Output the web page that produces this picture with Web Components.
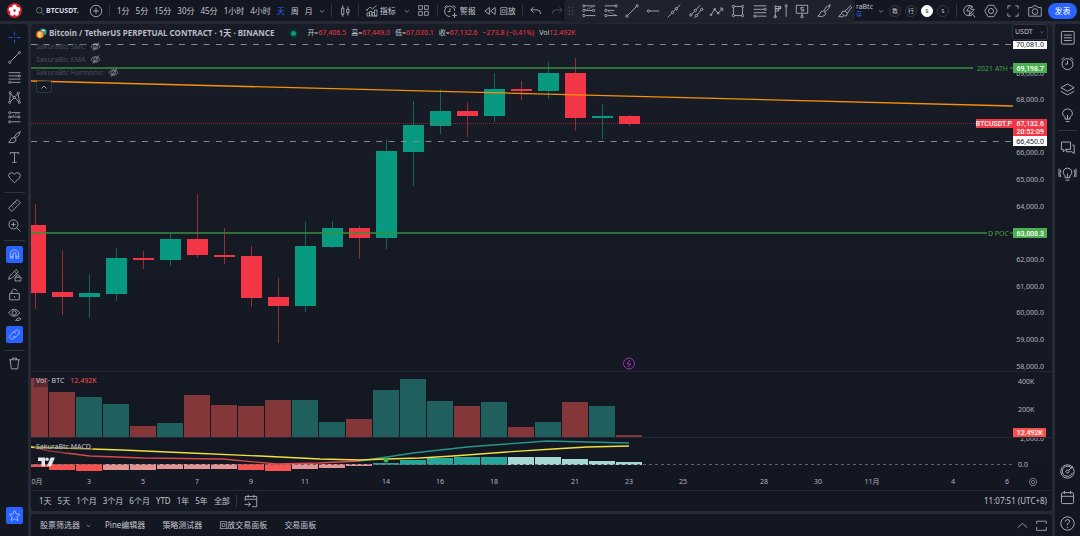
<!DOCTYPE html>
<html lang="zh-CN">
<head>
<meta charset="utf-8">
<title>BTCUSDT.P</title>
<style>
body{margin:0;background:#262a35}
</style>
</head>
<body>
<tv-app></tv-app>
<script>
const BASE = `<style>
:host{box-sizing:border-box;font-family:"Noto Sans","Noto Sans CJK SC",sans-serif;color:#c3c6cf;font-size:8px;line-height:12px}
*{box-sizing:border-box}
button,select{font:inherit;color:inherit;background:none;border:0;padding:0;margin:0;white-space:nowrap}
button{display:inline-flex;align-items:center;justify-content:center;flex:none}
</style>`;
function define(name, html) {
  customElements.define(name, class extends HTMLElement {
    connectedCallback() {
      if (this.shadowRoot) return;
      this.attachShadow({mode: 'open'}).innerHTML = BASE + (typeof html === 'function' ? html(this) : html);
    }
  });
}

/* Icons on a 28-unit grid */
const c = (x, y, r = 2) => `<circle cx="${x}" cy="${y}" r="${r}"/>`;
const p = d => `<path d="${d}"/>`;
const ICONS = {
  search: c(12, 12, 8) + p('M18 18l7 7'),
  plus: c(14, 14, 10) + p('M14 9v10M9 14h10'),
  down: p('M9 12l5 5 5-5'),
  up: p('M5 18l9-8 9 8'),
  upsmall: p('M9 17l5-5 5 5'),
  candles: p('M8 9h4v11H8zM10 4v5M10 20v4M17 11h4v6h-4zM19 6v5M19 17v5'),
  indicators: p('M4 24V18h5v6M9 24V15h5v9M14 24v-7h5v7M19 24V12h5v12zM4 24h20M4 12l6-6 5 4 8-7') + c(4, 12, 1),
  grid: p('M5 5h7v7H5zM16 5h7v7h-7zM5 16h7v7H5zM16 16h7v7h-7z'),
  alarm: c(14, 15, 9) + p('M14 9v6h-4M4 8l5-4M24 8l-5-4'),
  alarmadd: p('M22.500 14a9 9 0 1 0-8 9.500M14 9v6h-4M4 8l5-4M24 8l-5-4M22 17v9M17.500 21.500h9'),
  replay: p('M13 8v12l-8-6zM23 8v12l-8-6z'),
  undo: p('M10 7l-5 5 5 5M5 12h11q6 0 6 7'),
  redo: p('M18 7l5 5-5 5M23 12H12q-6 0-6 7'),
  bolt: p('M21 8a9 9 0 1 0 1 9M20 20l5 5M16 4l-6 10h6l-2 8 9-11h-6l2-6'),
  hex: p('M9 4h10l6 10-6 10H9L3 14z') + c(14, 14, 4.5),
  full: p('M5 10V5h5M18 5h5v5M23 18v5h-5M10 23H5v-5'),
  camera: p('M3 8h6l2-3h6l2 3h6v15H3z') + c(14, 15, 5),
  cross: p('M14 3v7M14 18v7M3 14h7M18 14h7M13 14h2'),
  line: c(5, 23) + c(23, 5) + p('M7 21L21 7'),
  hray: c(6, 14) + p('M8 14h17'),
  extline: p('M3 25L10 18M13 15l4-4M19 9l6-6') + c(11.5, 16.5) + c(18, 10),
  channel: c(5, 21) + c(13, 13) + c(15, 22) + c(24, 11) + p('M6.500 19.500l5-5M14.500 11.500L21 4M16.500 20.500l6-8M11 26l3-2.500'),
  zigzag: p('M4 20l6-9 6 7 7-8M19 9h5v5') + c(3.5, 20.5, 1.5) + c(10, 11, 1.5) + c(16, 18, 1.5),
  rect: c(6, 6) + c(22, 6) + c(6, 22) + c(22, 22) + p('M8 6h12M8 22h12M6 8v12M22 8v12'),
  fib: p('M3 5h22M3 11h18M3 17h22M7 23h18') + c(23, 11) + c(5, 23),
  pattern: c(6, 5) + c(21, 6) + c(5, 23) + c(13, 14) + c(23, 23) + p('M6 7L5 21M7 7l5 6M20 8l-6 5M21 8l2 13M6 22l6-6M15 15l7 7'),
  position: p('M8 5h17M8 13h12M8 22h17') + c(5, 5) + c(5, 13) + c(22, 13) + c(5, 22) + `<path stroke-dasharray="2 2" d="M7 12L23 6"/>`,
  positiondown: p('M3 5h18M8 13h12M8 22h17') + c(23, 5) + c(5, 13) + c(5, 22) + `<path stroke-dasharray="2 2" d="M9 15l14 6"/>`,
  volprofile: p('M4 4v21M4 6h9v4H4M4 10h6v4H4M23 7v17') + c(4, 24) + c(23, 5) + c(12, 8),
  note: p('M4 4h20v14H4zM14 18v5M17 8h-5v3h5v3h-5') + c(14, 24),
  brush: p('M25 3q-9 3-11 10l2 2q7-4 9-12M13 14q-5 0-6 4-1 4-4 5 8 2 12-1 3-3 1-6z'),
  marker: p('M25 4L14 14l4 4L26 7M14 14l-5 1-1 3 5 5 4-1 1-4M8 18l-5 6h7l2-2'),
  text: p('M6 8V5h16v3M14 5v18M10 23h8'),
  heart: p('M14 24L5 15Q1 10 5 6q5-3 9 2 4-5 9-2 4 4 0 9z'),
  ruler: p('M3 19L19 3l6 6L9 25zM8 14l3 3M12 10l2 2M15 7l3 3'),
  zoom: c(12, 12, 8.5) + p('M18 18l7 7M12 8v8M8 12h8'),
  magnet: p('M5 22V13a9 9 0 0 1 18 0v9h-6v-9a3 3 0 0 0-6 0v9zM5 18h6M17 18h6'),
  penlock: p('M3 23l2-6L17 5l4 4-11 11zM14 8l4 4M15 19h11v7H15zM17 19v-3q3-4 6 0v3'),
  lock: p('M5 12h18v12H5zM9 12V7q3-5 8-2l2 3M14 17v3'),
  eyepen: p('M3 11q10-14 21 0Q13 24 3 11zM16 25l5-5 5 2-3 3z') + c(13.5, 11, 4),
  link: p('M12 9l4-4q4-3 7 1 3 3 0 7l-5 5q-3 3-7 0M16 19l-4 4q-4 3-7-1-3-3 0-7l5-5q3-3 7 0'),
  trash: p('M4 7h20M10 7V4h8v3M6 7l2 17h12l2-17'),
  star: p('M14 3l3.500 7.500 8 1-6 5.500 1.500 8-7-4-7 4 1.500-8-6-5.500 8-1z'),
  list: `<rect x="4" y="4" width="21" height="21" rx="2"/>` + p('M8 10h13M8 14.500h13M8 19h13'),
  layers: p('M14 5l11 6-11 6L3 11zM3 17l11 6 11-6'),
  bulb: p('M10 20v-3Q5 14 6 9q2-6 8-6t8 6q1 5-4 8v3zM11 24h6M14 20v-7'),
  chat: p('M4 5h15v12H11l-4 4v-4H4zM22 10h3v14l-4-3h-9v-4'),
  cast: p('M10 21v-3Q6 15 7 10q2-5 7-5t7 5q1 5-3 8v3zM11 25h6M14 21v-7M3 8q-3 6 0 12M25 8q3 6 0 12M0 6v14M28 6v14'),
  target: c(14, 14, 11) + p('M21 9a8.500 8.500 0 1 0 1 7M15 13l8-8') + c(14, 14, 2.5),
  calendar: `<rect x="4" y="6" width="20" height="18" rx="2"/>` + p('M4 12h20M9 3v5M19 3v5'),
  goto: p('M4 14V6h20v18h-8M4 11h20M9 3v5M19 3v5M3 20h10M9 16l4 4-4 4'),
  help: c(14, 14, 11) + p('M10.500 11q0-3.500 3.500-3.500t3.500 3q0 2-3.500 4v2M14 19v2'),
  restore: p('M5 11V6h18v5M5 17v6h18v-6'),
  eyeoff: p('M2 14q12-15 24 0-12 15-24 0zM7 25L23 3') + c(14, 14, 5),
  drag: [6, 14, 22].map(y => [10, 18].map(x => `<circle cx="${x}" cy="${y}" r="1" fill="currentColor"/>`).join('')).join('')
};
define('tv-icon', el => `<style>:host{display:block;flex:none;color:inherit;width:var(--size,16px);height:var(--size,16px)}
svg{display:block;width:100%;height:100%;fill:none;stroke:currentColor;stroke-width:1.500;overflow:visible}</style>
<svg viewBox="0 0 28 28" aria-hidden="true">${ICONS[el.getAttribute('name')]}</svg>`);
const icon = n => `<tv-icon name="${n}"></tv-icon>`;
const ib = (n, cls = '', label = n) => `<button class="${cls}" aria-label="${label}">${icon(n)}</button>`;

define('tv-topbar', `<style>
:host{display:flex;align-items:center;height:21px;background:#131722;position:relative;padding:0 3px 0 7px;white-space:nowrap}
tv-icon{color:#b2b5be}
.logo{width:15px;height:15px;flex:none;margin-right:13px}
.group{display:flex;align-items:center}
.sep{width:1px;height:13px;background:#2f333f;flex:none}
.sym{font-weight:700;font-size:7px;color:#d8dae0;--size:10px;gap:1px;width:47px;justify-content:flex-start}
.add{margin:0 5px 0 6px}
.times{gap:6px;margin-left:7px}
.times .on{color:#2962ff}
.chev{--size:12px}
.right{margin-left:auto}
.user{font-size:7px;line-height:8px;text-align:left;margin-right:2px}
.user small{display:block;font-size:6px;line-height:7px;color:#2962ff}
.r{width:12px;height:12px;border:1px solid #363a45;border-radius:50%;font-size:6px;line-height:8px;margin-left:4px}
.r.on{background:#fff;color:#131722;border-color:#fff}
.pub{background:#2962ff;color:#fff;border-radius:8px;width:29px;height:16px;margin-left:5px}
.tools{position:absolute;left:564px;top:0;width:291px;height:21px;background:#1e222d;border-radius:3px;display:flex;align-items:center;justify-content:space-between;padding:0 2px 0 1px;box-shadow:0 0 4px #0008}
.tools .drag{--size:12px;color:#555966;margin-right:-1px}
</style>
<svg class="logo" viewBox="0 0 30 30"><circle cx="15" cy="15" r="15" fill="#d3202b"/><g fill="#fff"><ellipse cx="15" cy="8.500" rx="4.500" ry="5.500"/><ellipse cx="15" cy="8.500" rx="4.500" ry="5.500" transform="rotate(72 15 15)"/><ellipse cx="15" cy="8.500" rx="4.500" ry="5.500" transform="rotate(144 15 15)"/><ellipse cx="15" cy="8.500" rx="4.500" ry="5.500" transform="rotate(216 15 15)"/><ellipse cx="15" cy="8.500" rx="4.500" ry="5.500" transform="rotate(288 15 15)"/></g><circle cx="15" cy="15" r="2.500" fill="#d3202b"/></svg>
<button class="sym">${icon('search')}BTCUSDT.</button>
${ib('plus', 'add')}<span class="sep"></span>
<div class="group times">${['1分','5分','15分','30分','45分','1小时','4小时','天','周','月'].map(t => `<button class="${t === '天' ? 'on' : ''}">${t}</button>`).join('')}</div>
<div class="group">
<button class="chev" style="margin:0 3px">${icon('down')}</button><span class="sep"></span>
<button style="margin:0 5px">${icon('candles')}</button><span class="sep"></span>
<button style="margin:0 5px 0 6px;gap:1px;--size:14px">${icon('indicators')}指标</button>
<button class="chev">${icon('down')}</button>
<button style="margin:0 6px 0 3px;--size:15px">${icon('grid')}</button><span class="sep"></span>
<button style="margin:0 4px;gap:2px">${icon('alarmadd')}警报</button>
<button style="margin:0 6px 0 2px;gap:2px">${icon('replay')}回放</button><span class="sep"></span>
<button style="margin:0 0 0 5px">${icon('undo')}</button>
<button style="margin:0 0 0 5px;opacity:.400">${icon('redo')}</button>
</div>
<div class="group right">
<button class="user"><span>raBtc<small>存</small></span></button>
<button class="chev" style="margin-right:-2px">${icon('down')}</button>
<button class="r">教</button><button class="r">行</button><button class="r on">S</button><button class="r">S</button>
<span class="sep" style="margin:0 4px 0 7px"></span>
<div class="group" style="gap:6px">${ib('bolt')}${ib('hex')}${ib('full')}${ib('camera')}</div>
<button class="pub">发表</button>
</div>
<div class="tools"><tv-icon class="drag" name="drag"></tv-icon>${['position','positiondown','line','hray','extline','channel','zigzag','rect','fib','volprofile','note','brush','marker'].map(n => ib(n)).join('')}</div>`);

define('tv-leftbar', `<style>
:host{display:flex;flex-direction:column;align-items:center;background:#131722;padding:4px 0 10px 1px;color:#b2b5be;border-radius:0 3px 0 0}
button{width:17px;height:17px;margin:1px 0 2px;border-radius:2px;--size:15px}
.on{background:#2962ff;color:#c8d6ff;--size:13px}
.sel{color:#2962ff}
hr{width:21px;height:1px;border:0;background:#2f333f;margin:4px 0 3px;flex:none}
.fav{margin-top:auto}
</style>
${ib('cross', 'sel')}${['line','fib','pattern','position','brush','text','heart'].map(n => ib(n)).join('')}<hr>
${ib('ruler')}${ib('zoom')}<hr style="margin-bottom:4px">${ib('magnet', 'on')}${ib('penlock')}${ib('lock')}${ib('eyepen')}${ib('link', 'on')}<hr style="margin-top:5px">${ib('trash')}${ib('star', 'on fav')}`);

define('tv-sidebar', `<style>
:host{display:flex;flex-direction:column;align-items:center;background:#131722;padding:4px 0 4px;color:#b2b5be;border-radius:3px 0 0 0}
button{width:20px;height:18px;margin:0 0 8px;--size:17px}
hr{width:19px;height:1px;border:0;background:#2f333f;margin:-2px 0 7px}
.b{margin-top:auto}
button:last-child{margin-bottom:0}
</style>
${ib('list')}${ib('alarm')}${ib('layers')}${ib('bulb')}<hr>${ib('chat')}${ib('cast')}${ib('target', 'b')}${ib('calendar')}${ib('help')}`);

define('tv-legend', `<style>
:host{display:block}
.t{display:flex;align-items:center;white-space:nowrap;height:14px}
h1{font-size:8px;font-weight:700;margin:0 17px 0 2px;color:#b9bcc5;line-height:14px}
.coin{width:11px;height:11px;flex:none}
.dot{width:5px;height:5px;border-radius:50%;background:#089981;box-shadow:0 0 0 2px #0b3236;margin-right:11px;flex:none}
.v{color:#f23645;font-size:7px;margin-right:5px}.v b{font-weight:400;color:#c3c6cf}
.s{display:flex;align-items:center;gap:5px;height:13px;color:#4a4e59;font-size:7px}
.s tv-icon{--size:11px;color:#aeb1ba}
.c{border:1px solid #2f333f;border-radius:2px;width:16px;height:12px;--size:14px;margin-top:2px;background:#161a25}
</style>
<div class="t"><svg class="coin" viewBox="0 0 22 22"><circle cx="14" cy="8" r="7" fill="#26a5a0"/><path d="M11 5h6M14 5v6" stroke="#fff" stroke-width="2"/><circle cx="8" cy="13" r="8" fill="#f7931a" stroke="#181c27"/><path d="M6 9h3q3 2 0 4 4 2 0 4H6zM6 13h3" fill="none" stroke="#fff" stroke-width="1.500"/></svg>
<h1>Bitcoin / TetherUS PERPETUAL CONTRACT · 1天 · BINANCE</h1><span class="dot"></span>
<span class="v"><b>开=</b>67,406.5</span><span class="v"><b>高=</b>67,449.0</span><span class="v"><b>低=</b>67,030.1</span><span class="v"><b>收=</b>67,132.6</span><span class="v">−273.8 (−0.41%)</span><span class="v"><b>Vol</b>12.492K</span></div>
<div class="s">SakuraBtc SMC${icon('eyeoff')}</div><div class="s">SakuraBtc EMA${icon('eyeoff')}</div><div class="s">SakuraBtc Harmonic${icon('eyeoff')}</div>
<button class="c" aria-label="收起">${icon('upsmall')}</button>`);

/* Pane: a plot that fills the width and a fixed value axis */
define('tv-pane', `<style>
:host{display:grid;grid-template-columns:minmax(0,1fr) 39px;position:relative;overflow:hidden;min-height:0}
::slotted(svg){width:100%;height:100%;display:block}
</style><slot></slot>`);

const STEP = 27, X0 = 4;
/* high, top, bottom, low, rising, volume top */
const CANDLES = [[180,201,269,285,0,354],[226,268,273,291,0,368],[250,269,273,294,1,373],[224,234,270,277,1,380],[227,234,236,245,0,402],[210,215,236,242,1,399],[170,215,231,234,0,371],[204,231,233,240,0,381],[222,232,274,283,0,382],[254,273,282,319,0,376],[198,222,282,288,1,376],[197,204,223,224,1,398],[202,204,214,235,0,395],[115,127,214,225,1,366],[77,101,128,162,1,355],[65,87,102,110,1,377],[78,87,92,113,0,382],[49,65,92,98,1,378],[57,65,67,76,0,403],[38,49,67,75,1,398],[34,49,94,107,0,378],[80,92,94,115,1,382],[91,92,100,102,0,411]];
const HIST = [3,6,7,6,6,5,5,5,6,7,5,4,2,-2,-5,-7,-8,-8,-8,-8,-6,-4,-3];
const HC = ['#f7524f','#e59392','#26a69a','#a6d7d3'];
const HK = [0,0,0,1,1,1,1,1,0,0,1,1,1,2,2,2,2,2,3,3,3,3,3];
const candles = CANDLES.map(([h,t,b,l,up], i) => {
  const x = X0 + i * STEP, col = up ? '#089981' : '#f23645';
  return `<rect x="${x}" y="${h}" width="1" height="${l - h}" fill="${col}" opacity=".600"/><rect x="${x - 10}" y="${t}" width="21" height="${b - t}" fill="${col}"/>`;
}).join('');
const vols = CANDLES.map((k, i) => `<rect x="${X0 - 13 + i * STEP}" y="${k[5] - 348}" width="26" height="${413 - k[5]}" fill="${k[4] ? '#1f5f5d' : '#843739'}"/>`).join('');
const hist = HIST.map((h, i) => `<rect x="${X0 - 13 + i * STEP}" y="${h > 0 ? 26 : 27 + h}" width="26" height="${Math.abs(h)}" fill="${HC[HK[i]]}"/>`).join('');
const tick = (t, y) => `<text x="31" y="${y}" text-anchor="end">${t}</text>`;
const TIMES = [['10月',4],['3',58],['5',112],['7',166],['9',220],['11',274],['14',355],['16',409],['18',463],['21',544],['23',598],['25',652],['28',733],['30',787],['11月',841],['4',922],['6',976]];

define('tv-chart', `<style>
:host{display:grid;grid-template-rows:minmax(347px,1fr) 66px 34px 19px;position:relative;background:linear-gradient(#181c27,#131722);min-width:0;border-radius:3px 3px 0 0;overflow:hidden}
svg text{font-size:7px;fill:#b2b5be;font-family:"Noto Sans","Noto Sans CJK SC",sans-serif}
svg .w{fill:#fff;font-weight:500;font-family:Roboto,sans-serif}
svg .k{fill:#131722}
svg .g{fill:#43a047}
tv-pane + tv-pane{border-top:1px solid #242833}
tv-pane.time{border-top:0}
tv-legend{position:absolute;left:5px;top:2px}
.name{position:absolute;left:3px;padding:0 2px;font-size:7px;line-height:12px;color:#c3c6cf;background:#161a2566}
.name span{color:#f7524f;margin-left:6px}
.cur{position:absolute;right:4px;top:0;width:36px;height:16px;border:1px solid #2f333f;border-radius:2px;background:#131722;font-size:7px;appearance:none;padding:0 2px}
.chev{position:absolute;right:6px;top:4px;--size:8px;pointer-events:none}
.tv{position:absolute;left:7px;bottom:23px;width:17px;height:10px}
.set{position:absolute;right:14px;bottom:3px;--size:10px}
</style>
<tv-pane>
<svg>
${candles}
<path d="M0 99.500H4000" stroke="#f23645" stroke-dasharray="1 1" opacity=".500"/>
<path d="M0 20.500H4000M0 117.500H4000" stroke="#868993" stroke-dasharray="6 6.330"/>
<path d="M0 44H4000M0 209H4000" stroke="#388e3c" stroke-width="1.500"/>
<path d="M0 57L982 82L3928 156" stroke="#f79007" stroke-width="1.300" fill="none"/>
<g fill="none" stroke="#9c3bb5"><circle cx="598" cy="339.500" r="5.500" fill="#181426"/><path d="M599 336l-3 4h4l-3 3"/></g>
<svg x="100%" overflow="visible"><rect x="-40" y="38" width="40" height="12" fill="#181c27"/><rect x="-26" y="203" width="26" height="12" fill="#151923"/><path d="M-3 44h3M-3 209h3" stroke="#43a047"/><text class="g" x="-5" y="47" text-anchor="end">2021 ATH</text><text class="g" x="-4" y="212" text-anchor="end">D POC</text><rect x="-37" y="95" width="37" height="9" fill="#f23645"/><text class="w" x="-1" y="102" text-anchor="end">BTCUSDT.P</text></svg>
</svg>
<svg>
${tick('69,000.0', 52)}${[68,66,65,64,62,61,60,59,58].map(n => tick(n + ',000.0', Math.round(78 + (68 - n) * 26.65))).join('')}
<rect y="17" width="34" height="8" fill="#fff"/><text class="k" x="31" y="23" text-anchor="end">70,081.0</text>
<rect y="39" width="34" height="10" fill="#4caf50"/><text class="w" x="31" y="47" text-anchor="end">69,198.7</text>
<rect y="95" width="34" height="17" fill="#f23645"/><text class="w" x="31" y="102" text-anchor="end">67,132.6</text><text class="w" x="31" y="110" text-anchor="end">20:52:09</text>
<rect y="112" width="34" height="10" fill="#fff"/><text class="k" x="31" y="120" text-anchor="end">66,450.0</text>
<rect y="204" width="34" height="10" fill="#4caf50"/><text class="w" x="31" y="212" text-anchor="end">63,008.3</text>
</svg>
</tv-pane>
<tv-pane><svg>${vols}</svg><svg><text x="5" y="12">400K</text><text x="5" y="40">200K</text><rect y="56" width="33" height="9" fill="#f7524f"/><text class="w" x="30" y="63" text-anchor="end">12.492K</text></svg><span class="name" style="top:3px">Vol · BTC<span>12.492K</span></span></tv-pane>
<tv-pane><svg>${hist}
<path d="M0 26.500H4000" stroke="#60636e" stroke-dasharray="3 3"/>
<g fill="none" stroke-width="1.300"><path d="M0 9L19 13L59 18L112 20L192 21L246 26L287 25L328 23" stroke="#d84a4a"/><path d="M328 23L356 19L382 15L409 12L436 9L462 7L489 5L516 3L556 4L598 5" stroke="#26958b"/><path d="M0 9L91 12L159 15L229 18L289 21L329 22L355 21L389 20L422 18L476 14L522 11L556 9L598 8" stroke="#f0df3c"/></g><circle cx="355" cy="22" r="2.500" fill="#4caf50"/></svg>
<svg>${tick('2,000.0', 3)}<text x="5" y="29">0.0</text></svg><span class="name" style="top:3px">SakuraBtc MACD</span></tv-pane>
<tv-pane class="time"><svg>${TIMES.map(([t, x]) => `<text x="${x}" y="13" text-anchor="middle">${t}</text>`).join('')}</svg><svg></svg></tv-pane>
<tv-legend></tv-legend>
<select class="cur" aria-label="货币"><option>USDT</option></select><span class="chev">${icon('down')}</span>
<svg class="tv" viewBox="0 0 34 20" fill="#e3e5ea"><path d="M0 1h14v18H7V8H0z"/><circle cx="18" cy="4.500" r="3.500"/><path d="M25 1h9l-8 18h-8z"/></svg>
<button class="set" aria-label="设置">${icon('hex')}</button>`);

define('tv-ranges', `<style>
:host{display:flex;align-items:center;gap:6px;height:21px;background:#131722;border-top:1px solid #242833;padding:0 5px 0 8px;border-radius:0 0 3px 3px}
i{width:1px;height:12px;background:#2f333f}
tv-icon{color:#b2b5be}
time{margin-left:auto}
</style>${['1天','5天','1个月','3个月','6个月','YTD','1年','5年','全部'].map(t => `<button>${t}</button>`).join('')}<i></i>${ib('goto')}<time>11:07:51 (UTC+8)</time>`);

define('tv-tabs', `<style>
:host{display:flex;align-items:center;gap:17px;height:22px;background:#131722;padding:0 3px 0 9px;margin-top:3px;border-radius:3px 3px 0 0}
.f{gap:3px;--size:11px;margin-right:-6px}
.e{margin-left:auto;display:flex;gap:4px;--size:15px;color:#b2b5be}
</style><button class="f">股票筛选器${icon('down')}</button><button>Pine编辑器</button><button>策略测试器</button><button>回放交易面板</button><button>交易面板</button>
<span class="e">${ib('up')}${ib('restore')}</span>`);

define('tv-app', `<style>
:host{display:grid;grid-template:21px minmax(0,1fr)/28px minmax(0,1fr) 25px;gap:3px;min-height:100vh}
tv-topbar{grid-column:1/-1}
main{display:flex;flex-direction:column;min-width:0}
tv-chart{flex:1}
</style><tv-topbar></tv-topbar><tv-leftbar></tv-leftbar><main><tv-chart></tv-chart><tv-ranges></tv-ranges><tv-tabs></tv-tabs></main><tv-sidebar></tv-sidebar>`);
</script>
</body>
</html>
